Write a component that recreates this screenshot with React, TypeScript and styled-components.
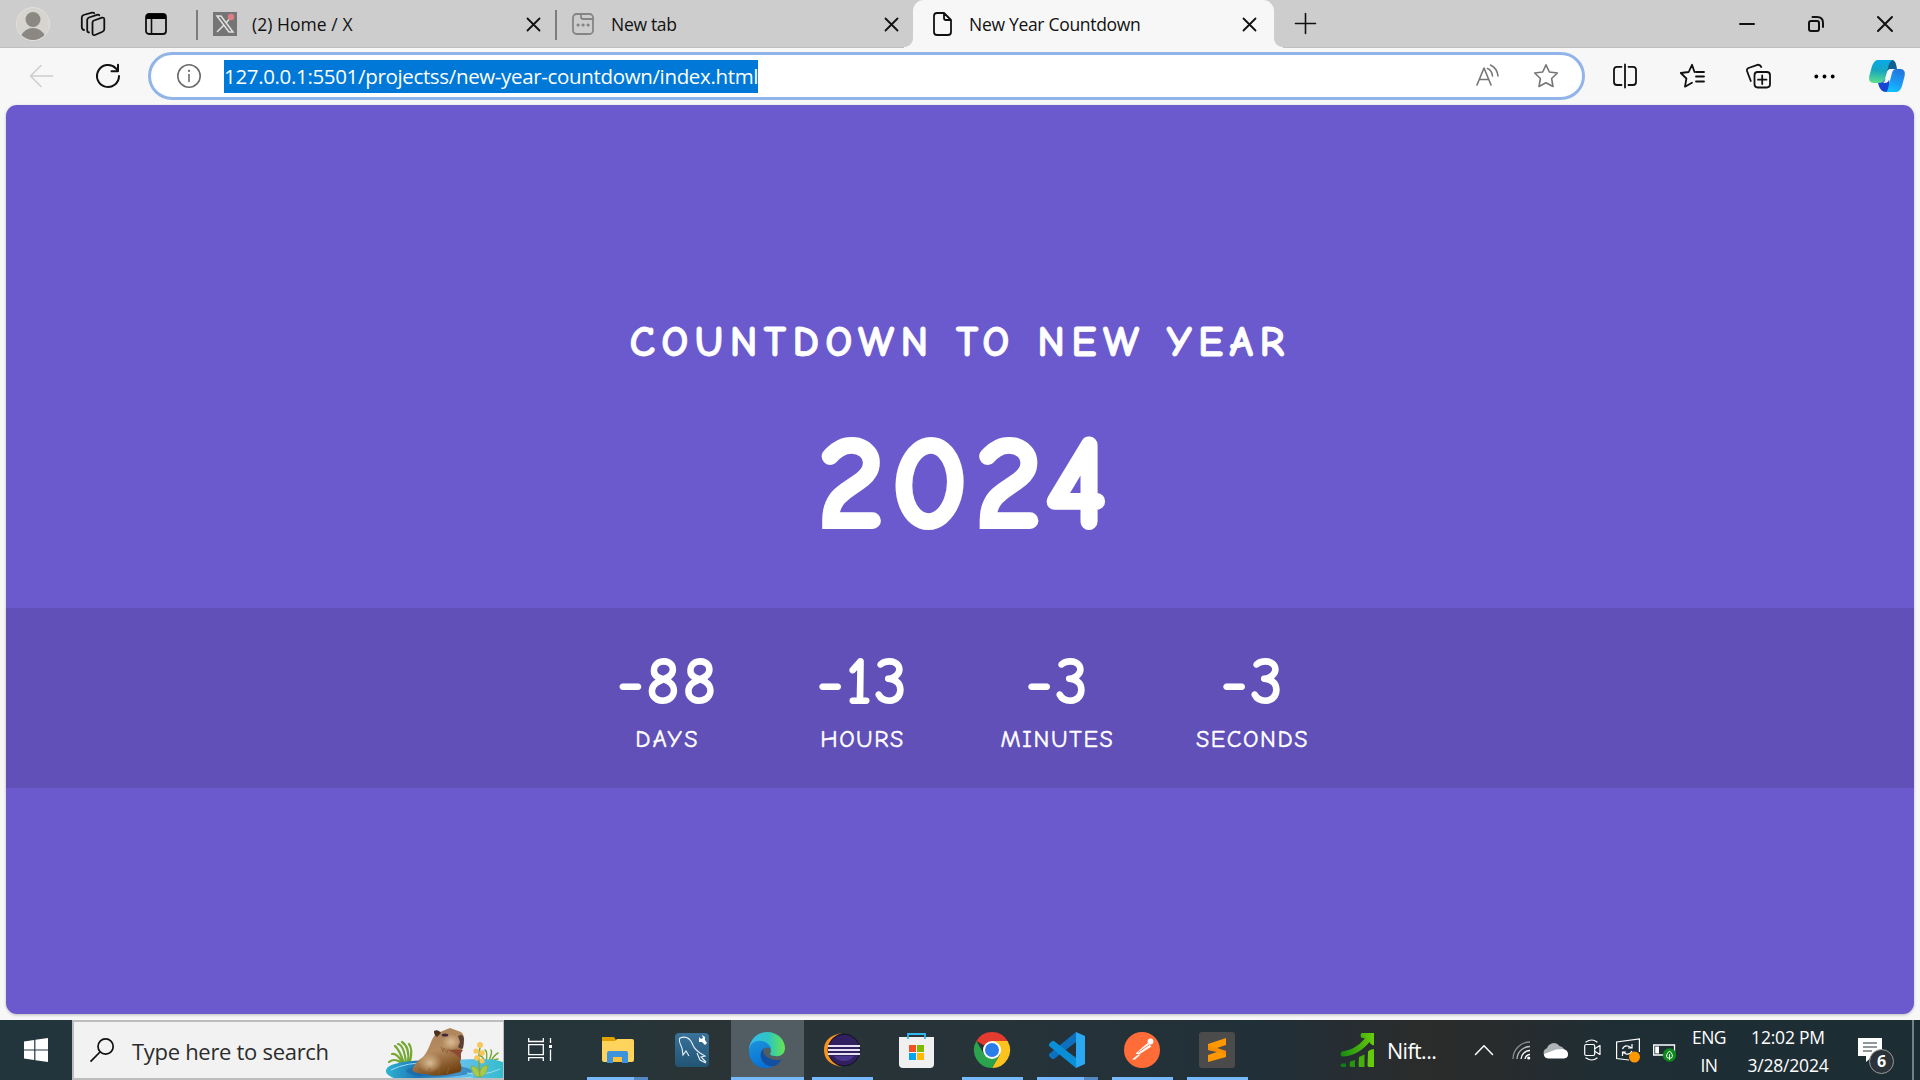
import React from 'react';
import styled, { createGlobalStyle } from 'styled-components';

const GlobalStyle = createGlobalStyle`
  * { box-sizing: border-box; }
  body { margin: 0; background: #f7f7f7; overflow: hidden; font-family: 'Segoe UI', 'Open Sans', 'Noto Sans', sans-serif; }
  svg { display: block; flex: none; overflow: visible; }
`;

const Screen = styled.div`
  width: 1920px;
  height: 1080px;
  display: flex;
  flex-direction: column;
  overflow: hidden;
`;

/* ---------- Browser tabs ---------- */
const TabStrip = styled.header`
  height: 48px;
  flex: none;
  display: flex;
  background: #cdcdcd;
  box-shadow: inset 0 -1px 0 #c0c0c0;
`;
const StripTools = styled.div`
  width: 196px;
  display: flex;
  align-items: center;
  padding: 0 0 1px 16px;
`;
const Avatar = styled.div`
  width: 34px;
  height: 34px;
  margin-right: 31px;
  border-radius: 50%;
  overflow: hidden;
  background: #d6d4cf;
  border: 1px solid #e2e0dc;
`;
const Tab = styled.div<{ $width: number; $active?: boolean; $divider?: boolean }>`
  position: relative;
  width: ${p => p.$width}px;
  height: 48px;
  display: flex;
  align-items: center;
  padding: 0 ${p => (p.$active ? 18 : 15)}px 0 ${p => (p.$active ? 20 : 17)}px;
  background: ${p => (p.$active ? '#f7f7f7' : 'transparent')};
  border-radius: 11px 11px 0 0;
  &::before {
    content: '';
    position: absolute;
    display: ${p => (p.$divider ? 'block' : 'none')};
    left: 0;
    top: 10px;
    width: 2px;
    height: 30px;
    background: #7c7c7c;
  }
`;
const Flare = styled.span<{ $side: 'left' | 'right' }>`
  position: absolute;
  bottom: 0;
  ${p => p.$side}: -9px;
  width: 9px;
  height: 10px;
  background: radial-gradient(circle at ${p => (p.$side === 'left' ? '0 0' : '100% 0')}, transparent 8.5px, #f7f7f7 9.5px);
`;
const TabTitle = styled.span<{ $gap: number; $spacing: number }>`
  flex: 1;
  margin-left: ${p => p.$gap}px;
  padding-bottom: 1px;
  font-size: 17.5px;
  line-height: 24px;
  letter-spacing: ${p => p.$spacing}px;
  white-space: nowrap;
  color: #111;
`;
const NewTab = styled.div`
  padding: 13px 0 0 21px;
`;
const WindowButtons = styled.div`
  margin-left: auto;
  display: flex;
  align-items: center;
  gap: 53px;
  padding: 0 27px 1px 0;
`;

/* ---------- Toolbar ---------- */
const Toolbar = styled.div`
  height: 57px;
  flex: none;
  display: flex;
  align-items: center;
  padding: 0 15px 1px 29px;
  background: #f7f7f7;
`;
const NavButtons = styled.div`
  width: 119px;
  display: flex;
  gap: 43px;
`;
const AddressBar = styled.div`
  width: 1437px;
  height: 48px;
  display: flex;
  align-items: center;
  padding: 0 24px 0 26px;
  background: #fff;
  border: 3px solid #93b4e9;
  border-radius: 24px;
`;
const Url = styled.span`
  width: 534px;
  height: 33px;
  margin: 0 auto 0 23px;
  background: #0078d7;
  color: #fff;
  font-size: 20.5px;
  line-height: 33px;
  letter-spacing: -0.34px;
  white-space: nowrap;
`;
const AddressIcons = styled.div`
  display: flex;
  align-items: center;
  gap: 34px;
`;
const ToolbarIcons = styled.div`
  flex: 1;
  display: grid;
  grid-template-columns: 67px 66px 68px 55px 36px;
  align-items: center;
  padding-left: 28px;
`;

/* ---------- Countdown page ---------- */
const Viewport = styled.div`
  height: 915px;
  flex: none;
  padding: 0 6px 6px;
  background: #f7f7f7;
`;
const Page = styled.main`
  height: 909px;
  display: flex;
  flex-direction: column;
  align-items: center;
  border-radius: 11px;
  background: #6a5acd;
  box-shadow: 0 1px 3px rgba(0, 0, 0, 0.25);
  color: #fff;
  font-family: 'Comic Sans MS', 'Comic Neue', Lato, sans-serif;
`;
const Heading = styled.h1`
  margin: 208px 0 0;
  font-size: 42.5px;
  font-weight: 700;
  line-height: 60px;
  letter-spacing: 6.4px;
  -webkit-text-stroke: 0.8px #fff;
  text-transform: uppercase;
  white-space: nowrap;
`;
const Year = styled.div`
  margin-top: 26px;
  height: 170px;
  padding-left: 12px;
  font-size: 134px;
  line-height: 170px;
  font-weight: 900;
  letter-spacing: 7px;
  -webkit-text-stroke: 4px #fff;
`;
const Band = styled.section`
  width: 100%;
  height: 180px;
  margin-top: 39px;
  display: flex;
  justify-content: center;
  background: #6050b8;
`;
const Unit = styled.div`
  width: 195px;
  padding-top: 36px;
  display: flex;
  flex-direction: column;
  align-items: center;
`;
const Amount = styled.div`
  font-size: 68px;
  font-weight: 700;
  line-height: 76px;
  letter-spacing: 1.5px;
`;
const UnitName = styled.div<{ $spacing: number }>`
  margin-top: 4px;
  font-size: 24px;
  line-height: 30px;
  letter-spacing: ${p => p.$spacing}px;
  -webkit-text-stroke: 0.5px #fff;
  text-transform: uppercase;
`;

/* ---------- Taskbar ---------- */
const Taskbar = styled.footer`
  height: 60px;
  flex: none;
  display: flex;
  background: linear-gradient(90deg, #22343c 0%, #26353a 32%, #2a3436 36%, #263339 52%, #212f38 66%, #2b2c2c 74%, #282c2d 78%, #1f2e35 84%, #1d2d34 100%);
  color: #fff;
`;
const Start = styled.div`
  width: 72px;
  padding: 18px 0 0 24px;
`;
const Search = styled.div`
  width: 432px;
  height: 60px;
  display: flex;
  padding-left: 16px;
  border: 2px solid #bdbdbd;
  border-right-width: 1px;
  background: #f2f2f2;
  color: #2c2c2c;
  overflow: hidden;
`;
const SearchText = styled.span`
  width: 254px;
  margin-left: 17px;
  font-size: 22px;
  line-height: 58px;
  letter-spacing: -0.3px;
  white-space: nowrap;
`;
const TaskView = styled.div`
  width: 76px;
  padding: 18px 0 0 24px;
`;
const Apps = styled.div`
  display: grid;
  grid-template-columns: repeat(9, 75px);
`;
const AppCell = styled.div<{ $active?: boolean; $open?: boolean; $multi?: boolean }>`
  display: flex;
  flex-direction: column;
  align-items: center;
  justify-content: space-between;
  padding-top: 12px;
  margin-right: ${p => (p.$active ? 1 : 0)}px;
  margin-left: ${p => (p.$active ? 1 : 0)}px;
  background: ${p => (p.$active ? '#515d62' : 'transparent')};
  & > svg {
    margin-right: 1px;
  }
  &::after {
    content: '';
    width: ${p => (p.$active ? 73 : 61)}px;
    height: 3px;
    background: ${p => (!p.$open ? 'transparent' : p.$multi ? 'linear-gradient(90deg, #76b9ff 47px, #5388c0 47px)' : '#76b9ff')};
  }
`;
const Stocks = styled.div`
  width: 220px;
  padding-left: 85px;
  display: flex;
  align-items: center;
  gap: 13px;
  font-size: 21.5px;
  letter-spacing: -0.6px;
`;
const Tray = styled.div`
  display: grid;
  grid-template-columns: 37px 32px 40px 32px 37px 23px;
  align-items: center;
`;
const Stack = styled.div<{ $width: number; $spacing: number }>`
  width: ${p => p.$width}px;
  display: flex;
  flex-direction: column;
  align-items: center;
  padding-top: 3px;
  font-size: 17.5px;
  line-height: 28px;
  letter-spacing: ${p => p.$spacing}px;
  white-space: nowrap;
`;
const Notifications = styled.div`
  position: relative;
  width: 78px;
  padding: 18px 0 0 24px;
`;
const Badge = styled.span`
  position: absolute;
  left: 35px;
  top: 29px;
  width: 25px;
  height: 25px;
  border: 1px solid #97999a;
  border-radius: 50%;
  background: #2b3338;
  font-size: 16px;
  font-weight: 700;
  line-height: 23px;
  text-align: center;
`;
const ShowDesktop = styled.div`
  width: 8px;
  border-left: 2px solid #758085;
`;

const Line = ({ w, h, color = '#111', sw = 1.6, children }: { w: number; h: number; color?: string; sw?: number; children: React.ReactNode }) => (
  <svg width={w} height={h} viewBox={`0 0 ${w} ${h}`} fill="none" stroke={color} strokeWidth={sw} strokeLinecap="round" strokeLinejoin="round">{children}</svg>
);
const Close = ({ size = 13 }: { size?: number }) => (
  <Line w={size} h={size} sw={1.8}><path d={`M.5.5 ${size - 0.5} ${size - 0.5}M${size - 0.5}.5.5 ${size - 0.5}`} /></Line>
);

const Capybara = () => (
  <svg width="118" height="54" viewBox="6 8 118 54" style={{ marginTop: 5 }}>
    <defs>
      <linearGradient id="pond" x1="0" x2="1"><stop offset="0" stopColor="#2fb3d4" /><stop offset=".28" stopColor="#1c73b4" /><stop offset=".6" stopColor="#6cc0ee" /><stop offset="1" stopColor="#33bccd" /></linearGradient>
      <linearGradient id="fur" x1=".2" y1="0" x2=".6" y2="1"><stop offset="0" stopColor="#a98258" /><stop offset=".5" stopColor="#b58b60" /><stop offset="1" stopColor="#70400f" /></linearGradient>
      <radialGradient id="furLight"><stop offset="0" stopColor="#d8bb94" /><stop offset="1" stopColor="#d8bb94" stopOpacity="0" /></radialGradient>
    </defs>
    <g fill="none" stroke="#75a832" strokeWidth="2.2" strokeLinecap="round">
      <path d="M25 44Q20 30 16 27M27 44Q25 26 19 25M29 44Q31 28 23 23M31 43Q34 30 30 25M23 43Q18 34 13 35M21 43Q15 39 10 43" />
      <path d="M107 44Q109 32 106 31M109 44Q114 33 112 31M111 44Q115 36 119 34M112 43Q116 40 119 40M106 43Q103 36 101 37" strokeWidth="1.5" />
    </g>
    <path d="M7 53C5 42 40 41 63 41S110 38 124 43V63H40C22 62 9 59 7 53Z" fill="url(#pond)" />
    <ellipse cx="60" cy="52" rx="33" ry="6" fill="#16609e" opacity=".5" />
    <path d="M12 51Q28 43 50 44M88 54Q103 58 121 50M44 60Q70 62 94 58" fill="none" stroke="#9bdcf4" strokeWidth="1" />
    <path d="M33 51Q36 43 44 38C51 30 51 22 56 16L55 13Q59 10 61 13L71 9 82 13Q86 16 85 24L84 29Q83 32 79 31Q84 37 81 43Q84 50 81 53Q58 59 47 55Q36 55 33 51Z" fill="url(#fur)" />
    <ellipse cx="51" cy="44" rx="12" ry="10" fill="url(#furLight)" />
    <ellipse cx="72" cy="23" rx="9" ry="8" fill="url(#furLight)" />
    <path d="M55 12Q59 10 62 14L58 18Q55 16 55 12Z" fill="#4b2f21" />
    <ellipse cx="66" cy="16" rx="3.3" ry="1.6" fill="#402838" />
    <path d="M79 17Q84 14 85 20L84 29Q82 31 79 28L81 23Z" fill="#594039" />
    <path d="M70 31Q79 30 84 31Q81 34 82 40Q77 35 70 31Z" fill="#8b4936" />
    <path d="M62 28l2 5 1-4 3 5 1-4 4 5M42 49l-2 5M51 49l-2 6M61 50l-2 6M70 48l-2 7" fill="none" stroke="#8b6038" strokeWidth=".8" />
    <path d="M102 56Q98 42 101 28" fill="none" stroke="#85a736" strokeWidth="1.5" />
    <g fill="#f9c659"><circle cx="101" cy="26" r="3" /><circle cx="97" cy="32" r="2.6" /><circle cx="103" cy="34" r="2.8" /><circle cx="98" cy="39" r="2.8" /><circle cx="103" cy="42" r="2.5" /></g>
    <path d="M101 58Q94 59 92 47Q101 47 101 58ZM101 58Q99 47 109 46Q108 57 101 58Z" fill="#a9c84d" stroke="#7faa3a" strokeWidth=".7" />
  </svg>
);

const Copilot = () => (
  <svg width="36" height="32" viewBox="0 0 36 32">
    <defs>
      <linearGradient id="cpA" x1=".3" y1="0" x2=".2" y2="1"><stop offset="0" stopColor="#0aa8e8" /><stop offset=".45" stopColor="#17a7bd" /><stop offset="1" stopColor="#61e08c" /></linearGradient>
      <linearGradient id="cpB" x1=".7" y1="0" x2=".4" y2="1"><stop offset="0" stopColor="#2573da" /><stop offset=".6" stopColor="#1a9cf5" /><stop offset="1" stopColor="#12c0ff" /></linearGradient>
    </defs>
    <path d="M19 0H24Q27 1 28 9H21Q17 10 15 19Z" fill="#10618f" />
    <path d="M8 0H24Q20 1 19 8L16 19Q15 23 11 23H4Q-1 22 .3 16L3 6Q5 1 8 0Z" fill="url(#cpA)" />
    <path d="M9 23Q11 32 17 32H22L20 20 16 19Q15 23 9 23Z" fill="#1745d3" />
    <path d="M17 32Q19 31 20 24L23 13Q24 9 27 9H32Q37 10 35.6 16L33 26Q31 32 27 32Z" fill="url(#cpB)" />
    <path d="M19.5 10Q21 8.800 24 9Q22.500 10 21.500 14L19.500 21Q18.500 23.500 14 23Q15.500 22 16.500 19Z" fill="#f7f7f7" />
  </svg>
);

const Explorer = () => (
  <svg width="33" height="36" viewBox="0 0 33 36">
    <path d="M1 5H13L15 8V14H1Z" fill="#e2a100" />
    <path d="M1 9H14L16 7H31Q33 7 33 9V28Q33 30 31 30H3Q1 30 1 28Z" fill="#ffd45c" />
    <path d="M6 31V21Q6 19 8 19H25Q27 19 27 21V31H21V25H12V31Z" fill="#3d94dc" />
    <path d="M12 25H21V30H12Z" fill="#f9c33b" />
  </svg>
);
const MySql = () => (
  <svg width="34" height="36" viewBox="0 0 34 36">
    <defs><linearGradient id="sql" x2="0" y2="1"><stop stopColor="#39729a" /><stop offset="1" stopColor="#225474" /></linearGradient></defs>
    <rect y="1" width="34" height="34" rx="4" fill="url(#sql)" />
    <path d="M7 16Q3 8 5 6Q13 3 17 11Q19 17 25 21L30 24L26 25L31 30M7 16L8 23L11 19L14 24M22 21L25 28L31 31" fill="none" stroke="#e9f3f9" strokeWidth="1.1" />
    <path d="M24 5l2 2 2-1-1-3 3 2v3l2 3-2 2-3-3h-3z" fill="#fff" />
  </svg>
);
const Edge = () => (
  <svg width="36" height="36" viewBox="0 0 36 36">
    <defs>
      <linearGradient id="edgeTop"><stop offset="0" stopColor="#35b8f2" /><stop offset=".55" stopColor="#2fc6bf" /><stop offset="1" stopColor="#65e64d" /></linearGradient>
      <linearGradient id="edgeLow" x2=".4" y2="1"><stop stopColor="#1d94dc" /><stop offset="1" stopColor="#0871d4" /></linearGradient>
    </defs>
    <path d="M0 16C2 6 9 0 18 0C29 0 36 8 36 16C36 22 31 25 26 24C21 24 20 22 22 20Q22 12 12 10Q4 10 0 18Z" fill="url(#edgeTop)" />
    <path d="M0 18C1 8 14 6 20 13Q22 15 22 17C17 13 11 18 12 25C13 31 20 35 25 34C10 41-1 29 0 18Z" fill="url(#edgeLow)" />
    <path d="M15 16C7 23 14 36 26 34Q30 32 33 27C27 30 19 27 15 22Q13 19 15 16Z" fill="#124fa0" />
  </svg>
);
const Eclipse = () => (
  <svg width="36" height="36" viewBox="0 0 36 36">
    <path d="M18 1Q0 4 0 18T18 35Q5 30 5 18T18 1Z" fill="#f7941e" />
    <circle cx="20" cy="18" r="16" fill="#30205f" stroke="#111220" strokeWidth="1" />
    <path d="M10 24H30Q27 29 20 29T10 24Z" fill="#4a368f" />
    <path d="M4 14H36M4 18H36M4 22H36" stroke="#e6e1f0" strokeWidth="2" />
  </svg>
);
const Store = () => (
  <svg width="36" height="36" viewBox="0 0 36 36">
    <path d="M0 5H35V32Q35 36 31 36H4Q0 36 0 32Z" fill="#f0f0f1" />
    <path d="M9 7V2H26V7" fill="none" stroke="#32b7ee" strokeWidth="1.8" />
    <path d="M10 13h7v7h-7z" fill="#f25022" /><path d="M18 13h7v7h-7z" fill="#7fba00" /><path d="M10 21h7v7h-7z" fill="#00a4ef" /><path d="M18 21h7v7h-7z" fill="#ffb900" />
  </svg>
);
const Chrome = () => (
  <svg width="36" height="36" viewBox="0 0 36 36">
    <path d="M18 18 2.4 9A18 18 0 0 1 33.6 9Z" fill="#e33b2e" />
    <path d="M18 9H33.6A18 18 0 0 1 18 36L25.8 22.5Z" fill="#fcc31e" />
    <path d="M2.4 9A18 18 0 0 0 18 36L25.8 22.5 18 18 10.2 22.5Z" fill="#2ba24c" />
    <circle cx="18" cy="18" r="9" fill="#fff" /><circle cx="18" cy="18" r="7" fill="#2b7de9" />
  </svg>
);
const VsCode = () => (
  <svg width="36" height="36" viewBox="0 0 36 36">
    <path d="M27 0V10L5 27H3L0 24V22Z" fill="#0c70bd" />
    <path d="M27 36V26L5 9H3L0 12V14Z" fill="#0a8ed5" />
    <path d="M27 0 36 4V32L27 36Z" fill="#2aa9f2" />
  </svg>
);
const Postman = () => (
  <svg width="36" height="36" viewBox="0 0 36 36">
    <circle cx="18" cy="18" r="18" fill="#ff6c37" />
    <circle cx="26.500" cy="9.500" r="2.900" fill="#fff" />
    <path d="M23.500 11 11.500 21.500 15 22.500 27.500 14.500ZM13.500 23 8 27.500H11L16.500 22.500" fill="#fff" />
    <path d="M14 20.500 25 13" stroke="#ff6c37" strokeWidth=".8" />
  </svg>
);
const Sublime = () => (
  <svg width="36" height="36" viewBox="0 0 36 36">
    <rect width="36" height="36" rx="3" fill="#4b4b4b" />
    <path d="M9 12 27 6V13L18 16 27 19V25L9 30V23L18 20 9 18Z" fill="#ff9800" />
    <path d="M18 16 27 19V22L9 18V14Z" fill="#f08500" opacity=".55" />
  </svg>
);
const Growth = () => (
  <svg width="34" height="36" viewBox="0 0 34 36">
    <defs><linearGradient id="grow"><stop stopColor="#168a12" /><stop offset="1" stopColor="#69cc0b" /></linearGradient></defs>
    <path d="M2 19.500Q15 18 25 6.500L21 5.500Q20 1 22 1H34V13Q31 14 29.500 10Q18 24 2 24.500Q-1 22 2 19.500Z" fill="url(#grow)" />
    <path d="M2 31.500h4v3.500H2Q-1 33 2 31.500Z" fill="#127d14" />
    <path d="M10 29.500 15 28v7h-4q-1.500 0-1.500-2z" fill="#25950f" />
    <path d="M19 25 24.500 22.500V35h-5q-1 0-1-2z" fill="#45b00d" />
    <path d="M28 19.500Q30 17 34 17V35h-5q-1.500 0-1.500-2z" fill="#65ca0b" />
  </svg>
);

const apps = [
  { Icon: Explorer, open: true, multi: true },
  { Icon: MySql },
  { Icon: Edge, open: true, active: true },
  { Icon: Eclipse, open: true },
  { Icon: Store },
  { Icon: Chrome, open: true },
  { Icon: VsCode, open: true, multi: true },
  { Icon: Postman, open: true },
  { Icon: Sublime, open: true },
];

const units = [
  { value: '-88', name: 'days', spacing: 2.4 },
  { value: '-13', name: 'hours', spacing: 1.5 },
  { value: '-3', name: 'minutes', spacing: 1.7 },
  { value: '-3', name: 'seconds', spacing: 1.6 },
];

const star = 'M12 .8 15.4 8 23.4 9 17.6 14.5 19 22.5 12 18.7 5 22.5 6.4 14.5 .7 9 8.7 8Z';

export default function App() {
  return (
    <Screen>
      <GlobalStyle />
      <TabStrip>
        <StripTools>
          <Avatar>
            <svg width="32" height="32" viewBox="0 0 32 32" fill="#8b8884"><circle cx="16" cy="11.5" r="7.5" /><path d="M4 28Q8 20 16 20T28 28V33H4Z" /></svg>
          </Avatar>
          <Line w={24} h={24} sw={1.8}>
            <path d="M11.5 10.5Q11.5 9 13 8.5L21 5.7Q23.3 5.2 23.3 7.5V17Q23.3 19 21.5 19.7L14 23Q11.5 23.7 11.5 21Z" />
            <path d="M8 20.5Q6.2 20.3 6.2 18V8Q6.2 6.2 8 5.5L16 2.8Q17.8 2.4 18.3 3.3M3 18Q.8 17.5.8 15V5.5Q.8 3.8 2.5 3L11 .7Q12.5.4 13.2 1.2" />
          </Line>
          <svg width="22" height="22" viewBox="0 0 22 22" style={{ marginLeft: 40 }}><rect x="1" y="1" width="20" height="20" rx="3" fill="none" stroke="#111" strokeWidth="1.8" /><path d="M1 4Q1 1 4 1H18Q21 1 21 4V6H1Z" fill="#000" /><path d="M6.5 6V21" stroke="#111" strokeWidth="1.6" /></svg>
        </StripTools>
        <Tab $width={359} $divider>
          <svg width="24" height="24" viewBox="0 0 24 24"><path d="M0 0H24V24H0Z" fill="#757575" /><path d="M4 4H8L20 20H16ZM19 4 13 11M11 13 4 20" fill="none" stroke="#e1e1e1" strokeWidth="1.5" /><circle cx="18" cy="5" r="3.2" fill="#e17e85" /></svg>
          <TabTitle $gap={15} $spacing={0.05}>(2) Home / X</TabTitle>
          <Close />
        </Tab>
        <Tab $width={358} $divider>
          <Line w={22} h={22} color="#858585" sw={1.8}><rect x="1" y="1" width="20" height="20" rx="3.5" /><path d="M9 1V4Q9 6 11 6H21" /><path d="M6 12h.2M11 12h.2M16 12h.2" strokeWidth="3" /></Line>
          <TabTitle $gap={17} $spacing={-0.3}>New tab</TabTitle>
          <Close />
        </Tab>
        <Tab $width={361} $active>
          <Flare $side="left" /><Flare $side="right" />
          <Line w={20} h={24} sw={1.8}><path d="M4 1H11L18 8V20Q18 23 15 23H4Q1 23 1 20V4Q1 1 4 1ZM11 1V6Q11 8 13 8H18" /></Line>
          <TabTitle $gap={16} $spacing={-0.3}>New Year Countdown</TabTitle>
          <Close />
        </Tab>
        <NewTab><Line w={21} h={21}><path d="M10.5.5V20.5M.5 10.5H20.5" /></Line></NewTab>
        <WindowButtons>
          <Line w={16} h={16} sw={2}><path d="M1 8H15" /></Line>
          <Line w={16} h={16} sw={2}><rect x="1" y="5" width="10" height="10" rx="2" /><path d="M4.5 1H9Q15 1 15 7V11" /></Line>
          <Line w={16} h={16} sw={2}><path d="M1 1 15 15M15 1 1 15" /></Line>
        </WindowButtons>
      </TabStrip>

      <Toolbar>
        <NavButtons>
          <Line w={24} h={24} color="#cecece"><path d="M23.5 12H1.5M12 1.5 1.5 12 12 22.5" /></Line>
          <Line w={24} h={24} sw={2}><path d="M23 12A11 11 0 1 1 20 4.5L22 7M22 .8V7.3H15.5" /></Line>
        </NavButtons>
        <AddressBar>
          <Line w={24} h={24} color="#6d6d6d"><circle cx="12" cy="12" r="11.2" /><path d="M12 10.5V17.5" /><path d="M12 6.8v.2" strokeWidth="2.2" /></Line>
          <Url>127.0.0.1:5501/projectss/new-year-countdown/index.html</Url>
          <AddressIcons>
            <Line w={24} h={24} color="#767676"><path d="M1 21 8 4 15 21M3.5 15.5H12.5M11.5 4.5Q16 6.5 16.5 12M14.5 1Q21 4 22 12" /></Line>
            <Line w={24} h={24} color="#767676"><path d={star} /></Line>
          </AddressIcons>
        </AddressBar>
        <ToolbarIcons>
          <Line w={24} h={24} sw={1.8}><path d="M12 .5V23.5M8.5 2.8H4Q1 2.8 1 5.8V18Q1 21 4 21H8.5M15.5 2.8H20Q23 2.8 23 5.8V18Q23 21 20 21H15.5" /></Line>
          <Line w={25} h={24} sw={1.8}><path d="M14.5 8 12 .8 8.7 8 .8 9 6.4 14.5 5 22.7 12 18.7M16 8H24M16 12.5H24M16 17.5H24" /></Line>
          <Line w={25} h={24} sw={1.8}><rect x="8.5" y="8" width="15.5" height="15.5" rx="3.2" /><path d="M16.2 11.5V20M12 15.7H20.5M4.8 17 1 7Q.5 5 2.5 4L11.5.8Q14 .3 15.3 3" /></Line>
          <svg width="21" height="5" viewBox="0 0 21 5"><circle cx="2.3" cy="2.5" r="1.9" /><circle cx="10.5" cy="2.5" r="1.9" /><circle cx="18.7" cy="2.5" r="1.9" /></svg>
          <Copilot />
        </ToolbarIcons>
      </Toolbar>

      <Viewport>
        <Page>
          <Heading>Countdown to New Year</Heading>
          <Year>2024</Year>
          <Band>
            {units.map(u => (
              <Unit key={u.name}>
                <Amount>{u.value}</Amount>
                <UnitName $spacing={u.spacing}>{u.name}</UnitName>
              </Unit>
            ))}
          </Band>
        </Page>
      </Viewport>

      <Taskbar>
        <Start><svg width="24" height="24" viewBox="0 0 24 24" fill="#fff"><path d="M0 3.4 10.2 2V11.4H0ZM11.4 1.8 24 0V11.4H11.4ZM0 12.6H10.2V22L0 20.6ZM11.4 12.6H24V24L11.4 22.2Z" /></svg></Start>
        <Search>
          <svg width="25" height="25" viewBox="0 0 25 25" fill="none" stroke="#111" strokeWidth="1.7" style={{ marginTop: 16 }}><circle cx="15.6" cy="8.5" r="7.6" /><path d="M10 14 .5 23.7" /></svg>
          <SearchText>Type here to search</SearchText>
          <Capybara />
        </Search>
        <TaskView><svg width="24" height="23" viewBox="0 0 24 23" fill="none" stroke="#fff" strokeWidth="1.3"><path d="M.7 0V3.5H15.3V0M.7 6.7H15.3V16.7H.7ZM.7 23V19.7H15.3V23M22.5 0V5M22.5 11.5V23" /><path d="M21 7h3v3h-3z" fill="#fff" stroke="none" /></svg></TaskView>
        <Apps>
          {apps.map(({ Icon, open, active, multi }, i) => (
            <AppCell key={i} $open={open} $active={active} $multi={multi}><Icon /></AppCell>
          ))}
        </Apps>
        <Stocks><Growth />Nift...</Stocks>
        <Tray>
          <Line w={18} h={10} color="#fff" sw={1.5}><path d="M.5 9.5 9 .8 17.5 9.5" /></Line>
          <svg width="19" height="19" viewBox="0 0 19 19" fill="none" strokeWidth="1.3"><path d="M1 18A17 17 0 0 1 18 1" stroke="#87908f" /><path d="M5 18A13 13 0 0 1 18 5.5" stroke="#b9bfc1" /><path d="M9 18A9 9 0 0 1 18 9.5M13 18A5.5 5.5 0 0 1 18 13.5" stroke="#fff" /><circle cx="16.7" cy="17" r="1.6" fill="#fff" /></svg>
          <svg width="24" height="17" viewBox="0 0 24 17"><path d="M4 16A5 5 0 0 1 3 6.3A7 7 0 0 1 15.5 4A6 6 0 0 1 20 7L24 12Q24 16 20 16Z" fill="#aeb3b5" /><path d="M4 16.5Q0 16 0 12L12 7.5 19 7Q24 8 24 12T20 16.5Z" fill="#fff" /></svg>
          <Line w={17} h={22} color="#fff" sw={1.2}><rect x=".7" y="5.5" width="10" height="11" rx="1.5" /><path d="M11 9.5 16 6.5V15.5L11 12.5M2 3Q8-1 13 3M2 19Q8 23 13 19" /></Line>
          <svg width="24" height="25" viewBox="0 0 24 25" fill="none" stroke="#fff" strokeWidth="1.2"><path d="M13 22 .6 20.5V4L23.4 1V14" /><path d="M6.5 11Q8 7 12 8L16 10M16 6V10H12M16 13Q14 17 10 16L6.5 14M6.5 18V14H10" /><circle cx="18.5" cy="19" r="5.5" fill="#ff9800" stroke="none" /></svg>
          <svg width="23" height="20" viewBox="0 0 23 20" style={{ marginTop: 4 }}><path d="M.7 3H21.5V13H.7Z" fill="none" stroke="#fff" strokeWidth="1.3" /><path d="M2.2 4.5H6V11.5H2.2Z" fill="#fff" /><circle cx="16.5" cy="13" r="6.7" fill="#0d8a1c" /><path d="M16.5 9Q12 13 14.5 16H18.5Q21 13 16.5 9ZM16.5 12V18" fill="none" stroke="#fff" /></svg>
        </Tray>
        <Stack $width={66} $spacing={-0.6}><span>ENG</span><span>IN</span></Stack>
        <Stack $width={92} $spacing={-0.2}><span>12:02 PM</span><span>3/28/2024</span></Stack>
        <Notifications>
          <svg width="24" height="24" viewBox="0 0 24 24"><path d="M0 0H24V18H15L8 24V18H0Z" fill="#fff" /><path d="M5 5H19M5 9H19M5 13H14" stroke="#24323a" strokeWidth="1.2" /></svg>
          <Badge>6</Badge>
        </Notifications>
        <ShowDesktop />
      </Taskbar>
    </Screen>
  );
}
